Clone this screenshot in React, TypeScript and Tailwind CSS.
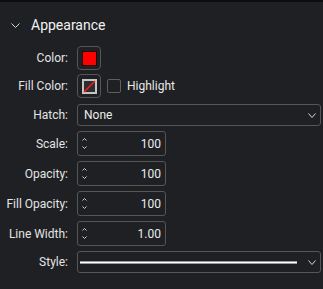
import React from 'react'

const SpinUpDown = () => (
  <div className="flex flex-col justify-between h-full py-[6px] pl-[4px]">
    <svg width="5" height="3" viewBox="0 0 5 3">
      <path d="M0.5 2.5 L2.5 0.5 L4.5 2.5" stroke="#cfcfcf" strokeWidth="1" fill="none" />
    </svg>
    <svg width="5" height="3" viewBox="0 0 5 3">
      <path d="M0.5 0.5 L2.5 2.5 L4.5 0.5" stroke="#cfcfcf" strokeWidth="1" fill="none" />
    </svg>
  </div>
)

const Chevron = ({ w = 8, h = 5 }: { w?: number; h?: number }) => (
  <svg width={w} height={h} viewBox={`0 0 ${w} ${h}`}>
    <path d={`M0.5 0.5 L${w / 2} ${h - 0.5} L${w - 0.5} 0.5`} stroke="#d8d8d8" strokeWidth="1" fill="none" />
  </svg>
)

const SpinBox = ({ value }: { value: string }) => (
  <div className="flex items-stretch w-[89px] h-[25px] border border-[#565656] rounded-[3px] bg-[#1f2023]">
    <SpinUpDown />
    <div className="flex-1 flex items-center justify-end pr-[4px] text-[12px] text-[#ececec]">{value}</div>
  </div>
)

const Label = ({ text }: { text: string }) => (
  <div className="w-[68px] shrink-0 text-right text-[12px] text-[#e4e4e4] whitespace-nowrap">{text}</div>
)

const App = () => {
  return (
    <div
      className="w-[323px] h-[289px] bg-[#1f2023] border-t-2 border-[#0c0c0d] overflow-hidden"
      style={{ fontFamily: 'Roboto, "Liberation Sans", sans-serif' }}
    >
      <div className="flex items-center h-[19px] mt-[14px]">
        <div className="ml-[11px] w-[20px]">
          <Chevron w={9} h={5} />
        </div>
        <span className="text-[14px] text-[#f2f2f2]">Appearance</span>
      </div>

      <div className="flex flex-col mt-[11px]">
        <div className="flex items-center gap-[9px] h-[24px]">
          <Label text="Color:" />
          <div className="w-[24px] h-[24px] border border-[#565656] rounded-[4px] flex items-center justify-center">
            <div className="w-[15px] h-[15px] bg-[#ff0000] border border-[#2a0000]" />
          </div>
        </div>

        <div className="flex items-center gap-[9px] h-[24px] mt-[4px]">
          <Label text="Fill Color:" />
          <div className="w-[24px] h-[24px] border border-[#565656] rounded-[4px] flex items-center justify-center">
            <svg width="15" height="15" viewBox="0 0 15 15">
              <rect x="1" y="1" width="13" height="13" fill="#2e2e30" stroke="#c4c4c4" strokeWidth="2" />
              <line x1="2" y1="13" x2="13" y2="2" stroke="#ff1a1a" strokeWidth="1.5" />
            </svg>
          </div>
          <div className="w-[14px] h-[14px] border border-[#5e5e5e] rounded-[2px] ml-[-3px]" />
          <span className="text-[12px] text-[#e8e8e8] ml-[-3px]">Highlight</span>
        </div>

        <div className="flex items-center gap-[9px] h-[22px] mt-[6px]">
          <Label text="Hatch:" />
          <div className="flex items-center justify-between w-[244px] h-[22px] border border-[#565656] rounded-[3px] pl-[6px] pr-[4px]">
            <span className="text-[12px] text-[#ececec]">None</span>
            <Chevron w={8} h={5} />
          </div>
        </div>

        <div className="flex items-center gap-[9px] h-[25px] mt-[5px]">
          <Label text="Scale:" />
          <SpinBox value="100" />
        </div>

        <div className="flex items-center gap-[9px] h-[25px] mt-[5px]">
          <Label text="Opacity:" />
          <SpinBox value="100" />
        </div>

        <div className="flex items-center gap-[9px] h-[25px] mt-[5px]">
          <Label text="Fill Opacity:" />
          <SpinBox value="100" />
        </div>

        <div className="flex items-center gap-[9px] h-[25px] mt-[5px]">
          <Label text="Line Width:" />
          <SpinBox value="1.00" />
        </div>

        <div className="flex items-center gap-[9px] h-[22px] mt-[5px]">
          <Label text="Style:" />
          <div className="flex items-center w-[244px] h-[22px] border border-[#565656] rounded-[3px] pl-[2px] pr-[4px]">
            <div className="flex-1 h-[3px] bg-[#ffffff] border-y border-[#9a9a9a] mr-[11px]" />
            <Chevron w={8} h={5} />
          </div>
        </div>
      </div>
    </div>
  )
}

export default App
